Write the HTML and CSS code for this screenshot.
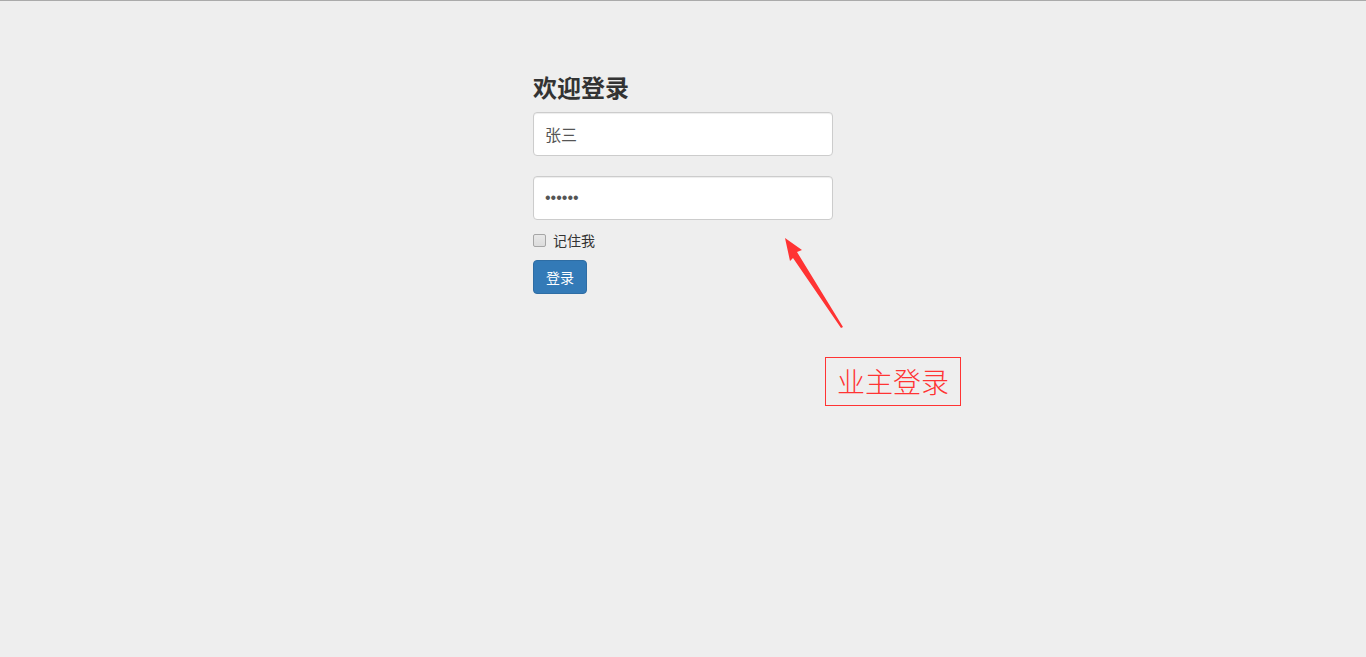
FILE: index.html
```html
<!DOCTYPE html>
<html lang="zh">
<head>
<meta charset="utf-8">
<title>欢迎登录</title>
<link rel="stylesheet" href="styles.css">
</head>
<body>
<div class="page">
  <form class="login">
    <h2 class="title">欢迎登录</h2>
    <input class="field" type="text" value="张三">
    <input class="field field-pass" type="password" value="123456">
    <label class="remember"><input type="checkbox" class="check"><span>记住我</span></label>
    <button type="button" class="btn">登录</button>
  </form>
  <svg class="arrow" width="80" height="110" viewBox="0 0 80 110">
    <polygon points="4,2 21,14 16,16 62,91 60,92 12,22 9,25" fill="#f33"/>
  </svg>
  <div class="note">业主登录</div>
</div>
</body>
</html>
```
FILE: styles.css
```css
html, body {
  margin: 0;
  padding: 0;
  height: 100%;
}
body {
  background: #eeeeee;
  border-top: 1px solid #aaaaaa;
  box-sizing: border-box;
  font-family: "Noto Sans CJK SC", "Noto Sans", sans-serif;
  color: #333;
  overflow: hidden;
}
.page {
  position: relative;
  height: 100%;
}
.login {
  width: 300px;
  margin: 0 auto;
  padding-top: 73px;
  display: flex;
  flex-direction: column;
  align-items: flex-start;
}
.title {
  margin: 0 0 12px;
  font-size: 24px;
  line-height: 26px;
  font-weight: 700;
  color: #333;
}
.field {
  box-sizing: border-box;
  width: 300px;
  height: 44px;
  margin: 0 0 20px;
  padding: 6px 11px;
  border: 1px solid #cccccc;
  border-radius: 4px;
  background: #fff;
  font-family: inherit;
  font-size: 16px;
  color: #555;
  box-shadow: inset 0 1px 1px rgba(0,0,0,0.075);
}
.field-pass {
  font-family: "Liberation Sans", sans-serif;
  margin-bottom: 10px;
}
.remember {
  display: flex;
  align-items: center;
  height: 20px;
  font-size: 14px;
  color: #333;
  margin-bottom: 10px;
}
.check {
  appearance: none;
  -webkit-appearance: none;
  box-sizing: border-box;
  margin: 0 7px 0 0;
  width: 13px;
  height: 13px;
  border: 1px solid #a6a6a6;
  border-radius: 2px;
  background: linear-gradient(#e8e8e8, #dcdcdc);
}
.btn {
  box-sizing: border-box;
  height: 34px;
  width: 54px;
  padding: 0;
  border: 1px solid #2e6da4;
  border-radius: 4px;
  background: #337ab7;
  color: #fff;
  font-family: inherit;
  font-size: 14px;
}
.arrow {
  position: absolute;
  left: 781px;
  top: 235px;
}
.note {
  position: absolute;
  left: 825px;
  top: 356px;
  width: 136px;
  height: 49px;
  box-sizing: border-box;
  border: 1px solid #f33;
  color: #f33;
  font-family: "Noto Sans CJK SC", serif;
  font-weight: 300;
  font-size: 28px;
  line-height: 47px;
  text-align: center;
}
```
